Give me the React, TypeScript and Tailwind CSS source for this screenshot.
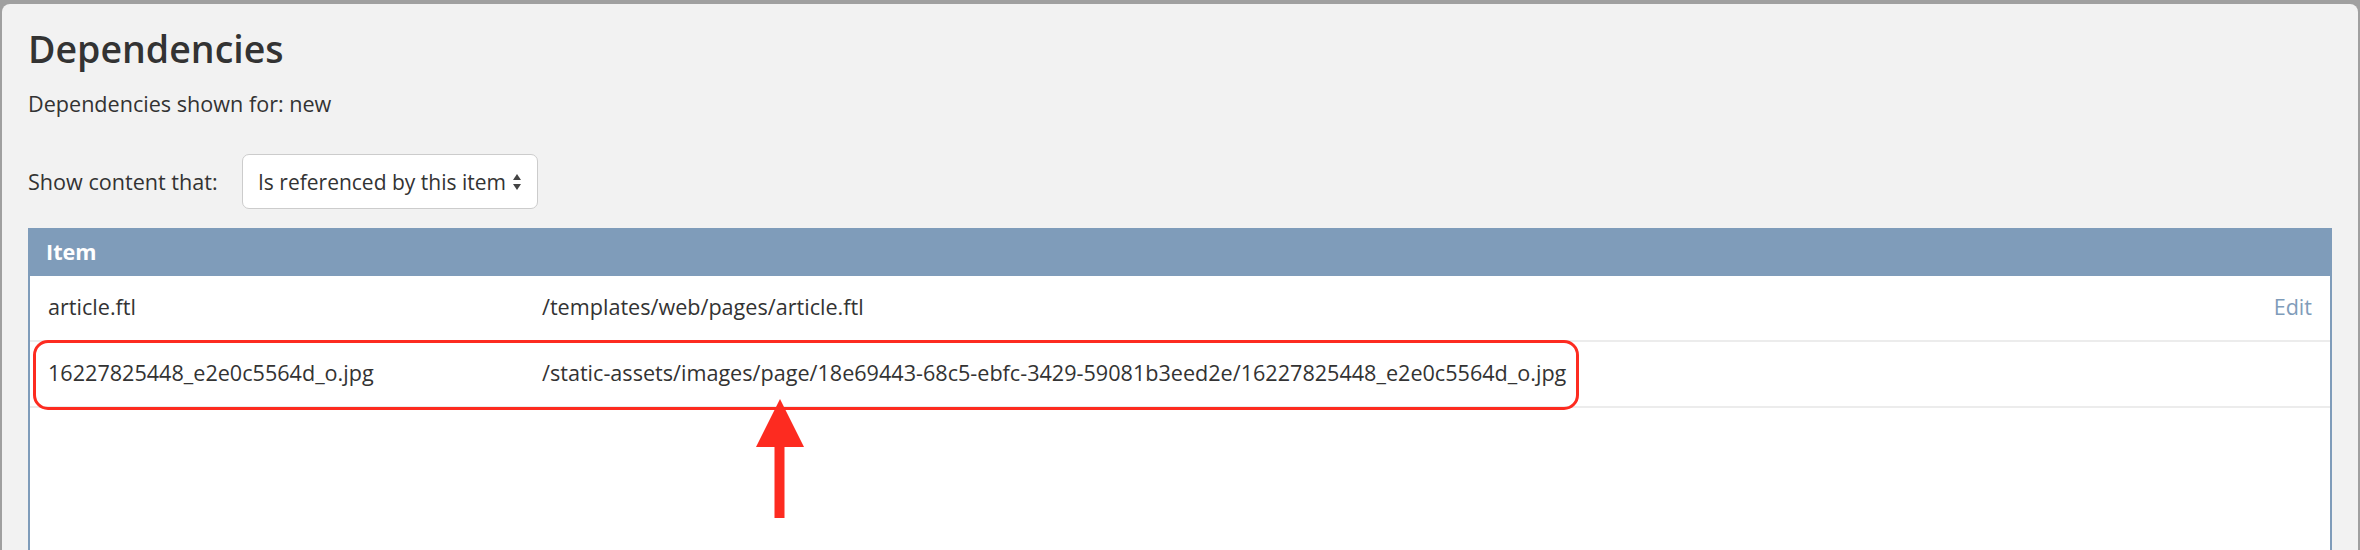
import React from 'react';

const rows = [
  { name: 'article.ftl', path: '/templates/web/pages/article.ftl', edit: true },
  {
    name: '16227825448_e2e0c5564d_o.jpg',
    path: '/static-assets/images/page/18e69443-68c5-ebfc-3429-59081b3eed2e/16227825448_e2e0c5564d_o.jpg',
    edit: false,
    highlight: true,
  },
];

function SelectArrows() {
  return (
    <svg width="10" height="18" viewBox="0 0 10 18" className="ml-[6px]">
      <path d="M5 1 L9 7 L1 7 Z" fill="#444" />
      <path d="M5 17 L9 11 L1 11 Z" fill="#444" />
    </svg>
  );
}

function Arrow() {
  return (
    <svg width="50" height="120" viewBox="0 0 50 120" className="absolute left-[725px] top-[57px]">
      <path d="M25 0 L49 48 L1 48 Z" fill="#fd2b20" />
      <rect x="19.5" y="46" width="10" height="73" fill="#fd2b20" />
    </svg>
  );
}

export default function App() {
  return (
    <div className="h-[550px] overflow-hidden bg-[#a0a0a0] pt-[4px] px-[2px] font-['Open_Sans',sans-serif] text-[#333]">
      <div className="h-full flex flex-col bg-[#f2f2f2] rounded-t-[8px] px-[26px] pt-[25px]">
        <h1 className="text-[37.5px] leading-[40px] font-semibold">Dependencies</h1>
        <p className="mt-[20px] text-[21.6px] leading-[30px]">Dependencies shown for: new</p>

        <div className="mt-[35px] flex items-center text-[21.6px] leading-[30px]">
          <span className="w-[214px]">Show content that:</span>
          <div className="w-[296px] h-[55px] flex items-center bg-white border border-[#cccccc] rounded-[7px] pl-[15px]">
            <span className="text-[21px]">Is referenced by this item</span>
            <SelectArrows />
          </div>
        </div>

        <div className="mt-[19px] flex-1 flex flex-col">
          <div className="h-[48px] bg-[#7f9cba] px-[18px] text-white text-[21.6px] leading-[48px] font-bold">Item</div>
          <div className="flex-1 bg-white border-x-2 border-[#7f9cba] text-[21.6px] leading-[30px]">
            {rows.map((r) => (
              <div key={r.name} className="relative h-[66px] flex items-center border-b-2 border-[#ececec] px-[18px] pb-[2px]">
                <span className="w-[494px]">{r.name}</span>
                <span className="flex-1">{r.path}</span>
                {r.edit && <span className="text-[#7f9cba]">Edit</span>}
                {r.highlight && (
                  <>
                    <div className="absolute left-[3px] top-[-2px] w-[1546px] h-[70px] border-[3px] border-[#fd2b20] rounded-[15px]" />
                    <Arrow />
                  </>
                )}
              </div>
            ))}
          </div>
        </div>
      </div>
    </div>
  );
}
